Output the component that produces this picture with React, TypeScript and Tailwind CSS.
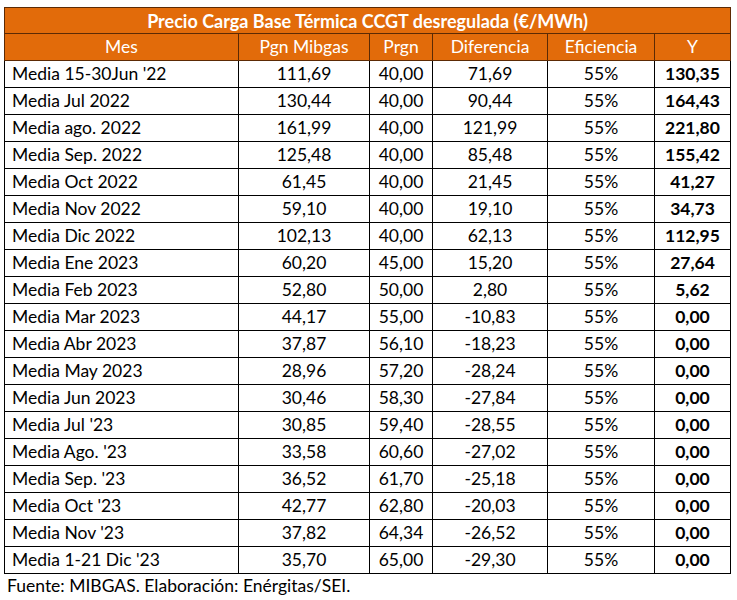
const ROWS: [string, string, string, string, string][] = [
  ["Media 15-30Jun '22", "111,69", "40,00", "71,69", "130,35"],
  ["Media Jul 2022", "130,44", "40,00", "90,44", "164,43"],
  ["Media ago. 2022", "161,99", "40,00", "121,99", "221,80"],
  ["Media Sep. 2022", "125,48", "40,00", "85,48", "155,42"],
  ["Media Oct 2022", "61,45", "40,00", "21,45", "41,27"],
  ["Media Nov 2022", "59,10", "40,00", "19,10", "34,73"],
  ["Media Dic 2022", "102,13", "40,00", "62,13", "112,95"],
  ["Media Ene 2023", "60,20", "45,00", "15,20", "27,64"],
  ["Media Feb 2023", "52,80", "50,00", "2,80", "5,62"],
  ["Media Mar 2023", "44,17", "55,00", "-10,83", "0,00"],
  ["Media Abr 2023", "37,87", "56,10", "-18,23", "0,00"],
  ["Media May 2023", "28,96", "57,20", "-28,24", "0,00"],
  ["Media Jun 2023", "30,46", "58,30", "-27,84", "0,00"],
  ["Media Jul '23", "30,85", "59,40", "-28,55", "0,00"],
  ["Media Ago. '23", "33,58", "60,60", "-27,02", "0,00"],
  ["Media Sep. '23", "36,52", "61,70", "-25,18", "0,00"],
  ["Media Oct '23", "42,77", "62,80", "-20,03", "0,00"],
  ["Media Nov '23", "37,82", "64,34", "-26,52", "0,00"],
  ["Media 1-21 Dic '23", "35,70", "65,00", "-29,30", "0,00"],
];

const HEADERS = ["Mes", "Pgn Mibgas", "Prgn", "Diferencia", "Eficiencia", "Y"];

export default function App() {
  return (
    <div className="min-h-[600px] w-[737px] bg-white pl-[4px] pt-[7px] font-['Lato',sans-serif] text-[17.5px] text-black">
      <table className="table-fixed border-collapse">
        <colgroup>
          <col className="w-[234px]" />
          <col className="w-[131px]" />
          <col className="w-[63px]" />
          <col className="w-[115px]" />
          <col className="w-[107px]" />
          <col className="w-[76px]" />
        </colgroup>
        <thead>
          <tr className="h-[26px] bg-[#e26b0a] text-white">
            <th colSpan={6} className="border border-[#5c2a04] p-0 text-center text-[18px] leading-none font-bold">
              Precio Carga Base Térmica CCGT desregulada (€/MWh)
            </th>
          </tr>
          <tr className="h-[27px] bg-[#e26b0a] text-white">
            {HEADERS.map((h) => (
              <th key={h} className="border border-[#5c2a04] p-0 text-center leading-none font-normal">
                {h}
              </th>
            ))}
          </tr>
        </thead>
        <tbody>
          {ROWS.map((r) => (
            <tr key={r[0]} className="h-[27px]">
              <td className="border border-black p-0 pl-[7px] text-left leading-none">{r[0]}</td>
              <td className="border border-black p-0 text-center leading-none">{r[1]}</td>
              <td className="border border-black p-0 text-center leading-none">{r[2]}</td>
              <td className="border border-black p-0 text-center leading-none">{r[3]}</td>
              <td className="border border-black p-0 text-center leading-none">55%</td>
              <td className="border border-black p-0 text-center leading-none font-bold">{r[4]}</td>
            </tr>
          ))}
        </tbody>
      </table>
      <p className="pl-[3px] leading-[24px]">Fuente: MIBGAS. Elaboración: Enérgitas/SEI.</p>
    </div>
  );
}
